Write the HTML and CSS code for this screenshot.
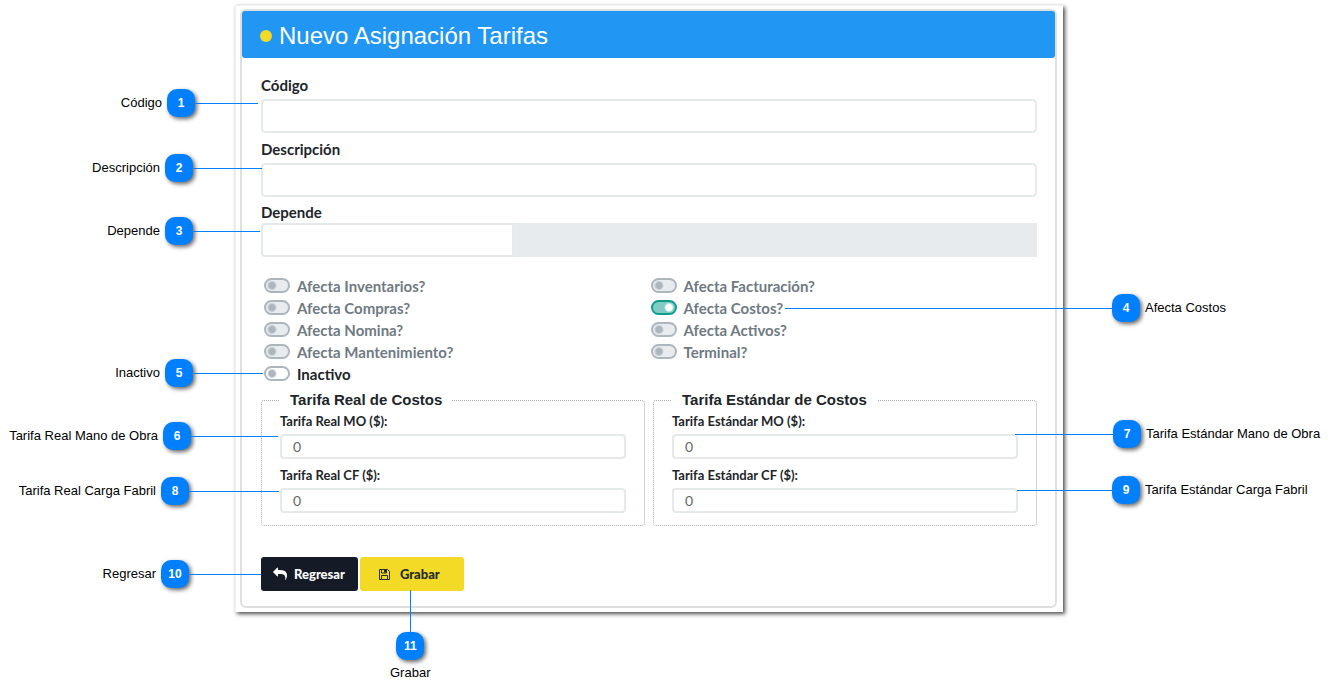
FILE: index.html
```html
<!DOCTYPE html>
<html lang="es">
<head>
<meta charset="utf-8">
<title>Nuevo Asignación Tarifas</title>
<link rel="stylesheet" href="styles.css">
</head>
<body>
<main class="figure">
  <form class="card">
    <h1 class="title"><span class="dot"></span>Nuevo Asignación Tarifas</h1>
    <div class="content">
      <div class="field">
        <label for="codigo">Código</label>
        <input class="text" id="codigo" type="text">
      </div>
      <div class="field">
        <label for="descripcion">Descripción</label>
        <input class="text" id="descripcion" type="text">
      </div>
      <div class="field field-tight">
        <label for="depende">Depende</label>
        <div class="group">
          <input class="text" id="depende" type="text">
          <span class="addon"></span>
        </div>
      </div>

      <div class="switches">
        <div class="switch-col">
          <label class="switch muted"><input type="checkbox" disabled>Afecta Inventarios?</label>
          <label class="switch muted"><input type="checkbox" disabled>Afecta Compras?</label>
          <label class="switch muted"><input type="checkbox" disabled>Afecta Nomina?</label>
          <label class="switch muted"><input type="checkbox" disabled>Afecta Mantenimiento?</label>
          <label class="switch"><input type="checkbox">Inactivo</label>
        </div>
        <div class="switch-col">
          <label class="switch muted"><input type="checkbox" disabled>Afecta Facturación?</label>
          <label class="switch muted"><input type="checkbox" disabled checked>Afecta Costos?</label>
          <label class="switch muted"><input type="checkbox" disabled>Afecta Activos?</label>
          <label class="switch muted"><input type="checkbox" disabled>Terminal?</label>
        </div>
      </div>

      <div class="rates">
        <fieldset class="rate">
          <legend>Tarifa Real de Costos</legend>
          <label for="real-mo">Tarifa Real MO ($):</label>
          <input class="text small" id="real-mo" type="text" value="0">
          <label for="real-cf">Tarifa Real CF ($):</label>
          <input class="text small" id="real-cf" type="text" value="0">
        </fieldset>
        <fieldset class="rate">
          <legend>Tarifa Estándar de Costos</legend>
          <label for="std-mo">Tarifa Estándar MO ($):</label>
          <input class="text small" id="std-mo" type="text" value="0">
          <label for="std-cf">Tarifa Estándar CF ($):</label>
          <input class="text small" id="std-cf" type="text" value="0">
        </fieldset>
      </div>

      <div class="actions">
        <button class="btn back" type="button">
          <svg width="14" height="14" viewBox="0 0 1792 1792" aria-hidden="true"><path fill="currentColor" d="M1792 1120q0 166-127 451-3 7-10.500 24t-13.500 30-13 22q-12 17-28 17-15 0-23.500-10t-8.500-25q0-9 2.500-26.500t2.500-23.500q5-68 5-123 0-101-17.500-181t-48.500-138.500-80-101-105.500-69.500-133-42.500-154-21.500-175.500-6h-224v256q0 26-19 45t-45 19-45-19l-512-512q-19-19-19-45t19-45l512-512q19-19 45-19t45 19 19 45v256h224q713 0 875 403 53 134 53 333z"/></svg>
          Regresar
        </button>
        <button class="btn save" type="button">
          <svg width="13" height="13" viewBox="0 0 13 13" fill="none" stroke="currentColor" aria-hidden="true"><path d="M1.500 1.500h8l2 2v8h-10z"/><path d="M3.500 1.500v3.500h5v-3.500M3.500 11.500v-4h6v4"/><path stroke-width="2" d="M7 2v2.500"/></svg>
          Grabar
        </button>
      </div>
    </div>
  </form>

  <div class="callout left c1">Código<b class="badge">1</b><i class="line"></i></div>
  <div class="callout left c2">Descripción<b class="badge">2</b><i class="line"></i></div>
  <div class="callout left c3">Depende<b class="badge">3</b><i class="line"></i></div>
  <div class="callout c4"><i class="line"></i><b class="badge">4</b>Afecta Costos</div>
  <div class="callout left c5">Inactivo<b class="badge">5</b><i class="line"></i></div>
  <div class="callout left c6">Tarifa Real Mano de Obra<b class="badge">6</b><i class="line"></i></div>
  <div class="callout c7"><i class="line"></i><b class="badge">7</b>Tarifa Estándar Mano de Obra</div>
  <div class="callout left c8">Tarifa Real Carga Fabril<b class="badge">8</b><i class="line"></i></div>
  <div class="callout c9"><i class="line"></i><b class="badge">9</b>Tarifa Estándar Carga Fabril</div>
  <div class="callout left c10">Regresar<b class="badge">10</b><i class="line"></i></div>
  <div class="callout below c11"><i class="line"></i><b class="badge">11</b>Grabar</div>
</main>
</body>
</html>
```

FILE: styles.css
```css
* { box-sizing: border-box; }

body {
  margin: 0;
  padding: 5px 271px 85px 235px;
  background: #fff;
  color: #212529;
  font-family: Lato, "Liberation Sans", sans-serif;
}

.figure {
  position: relative;
  padding: 3px 6px 4px 4px;
  border: 1px solid #f0f0f0;
  border-width: 1px 0 0 1px;
  box-shadow: 2px 2px 4px rgba(0, 0, 0, 0.7);
}

.card {
  border: 2px solid #dfdfdf;
  border-radius: 6px;
}

.title {
  display: flex;
  align-items: center;
  gap: 7px;
  height: 47px;
  margin: 0;
  padding: 2px 18px 0;
  border-radius: 3px;
  background: #2196f3;
  color: #fff;
  font: 24px/32px "Liberation Sans", Arial, sans-serif;
}

.dot {
  width: 12px;
  height: 12px;
  border-radius: 50%;
  background: #f2da26;
}

.content { padding: 17px 18px 15px 19px; }

.field {
  display: flex;
  flex-direction: column;
  gap: 4px;
  margin-bottom: 6px;
  font-size: 15px;
  font-weight: 700;
  line-height: 20px;
}

.field label { height: 20px; }
.field-tight { gap: 0; line-height: 18px; }

.text {
  width: 100%;
  height: 34px;
  padding: 0 11px;
  border: 2px solid #e4e9ea;
  border-radius: 4px;
  background: #fff;
  color: #666;
  font: 14px Lato, sans-serif;
}

.text.small {
  height: 25px;
}

.group { display: flex; }
.group .text { flex: 0 0 253px; border-radius: 4px 0 0 4px; }
.addon { flex: 1; background: #e7ebee; }

.switches {
  display: grid;
  grid-template-columns: 1fr 1fr;
  padding: 12px 0 0 3px;
}

.switch {
  display: flex;
  align-items: center;
  gap: 7px;
  height: 22px;
  font-size: 15px;
  font-weight: 700;
}

.switch.muted { color: #6f7a82; }

.switch input {
  appearance: none;
  width: 26px;
  height: 15px;
  margin: 0 0 2px;
  border: 2px solid #adb5bd;
  border-radius: 8px;
  background: radial-gradient(circle at 6px 50%, #adb5bd 3px, transparent 5px) #fff;
}

.switch input:disabled { background-color: #e9ecef; }

.switch input:checked {
  border-color: #109c8a;
  background: radial-gradient(circle at 16px 50%, #fff 3px, transparent 5px) #80cbc4;
}

.rates {
  display: grid;
  grid-template-columns: 1fr 1fr;
  gap: 8px;
  margin-top: 6px;
}

.rate {
  display: flex;
  flex-direction: column;
  min-width: 0;
  margin: 0;
  padding: 0 18px 12px;
  border: 1px dotted #aaa;
  border-radius: 3px;
  font-size: 13px;
  font-weight: 700;
  line-height: 20px;
}

.rate legend {
  padding: 0 10px;
  font: bold 15px/18px "Liberation Sans", Arial, sans-serif;
}

.rate label { margin: 2px 0 3px; }
.rate .text + label { margin-top: 6px; }

.actions {
  display: flex;
  gap: 2px;
  margin-top: 31px;
}

.btn {
  display: flex;
  align-items: center;
  justify-content: center;
  gap: 7px;
  height: 34px;
  padding: 0 13px 0 12px;
  border: 0;
  border-radius: 3px;
  font: 900 13px Lato, sans-serif;
}

.back { background: #151b26; color: #fff; }
.save { gap: 9px; padding: 0 24px 0 18px; background: #f2da26; color: #252c2c; }

.callout {
  position: absolute;
  display: flex;
  align-items: center;
  color: #000;
  font: 13px/20px "Liberation Sans", Arial, sans-serif;
  white-space: nowrap;
}

.badge {
  width: 28px;
  height: 28px;
  margin: 0 5px 0 0;
  border-radius: 10px;
  background: #0080ff;
  box-shadow: 2px 2px 4px rgba(0, 0, 0, 0.6);
  color: #fff;
  font-size: 12px;
  line-height: 28px;
  text-align: center;
}

.left .badge { margin: 0 0 0 5px; }

.line { height: 1px; background: #0080ff; }

.below { flex-direction: column; }
.below .badge { margin: 0 0 3px; }
.below .line { width: 1px; height: 42px; }

.c1 { top: 83px; right: calc(100% - 22px); }
.c1 .line { width: 63px; }
.c2 { top: 148px; right: calc(100% - 26px); }
.c2 .line { width: 69px; }
.c3 { top: 211px; right: calc(100% - 24px); }
.c3 .line { width: 67px; }
.c4 { top: 288px; left: calc(100% - 278px); }
.c4 .line { width: 327px; }
.c5 { top: 353px; right: calc(100% - 27px); }
.c5 .line { width: 70px; }
.c6 { top: 416px; right: calc(100% - 42px); }
.c6 .line { width: 87px; }
.c7 { top: 414px; left: calc(100% - 48px); }
.c7 .line { width: 98px; }
.c8 { top: 471px; right: calc(100% - 43px); }
.c8 .line { width: 90px; }
.c9 { top: 470px; left: calc(100% - 46px); }
.c9 .line { width: 95px; }
.c10 { top: 554px; right: calc(100% - 25px); }
.c10 .line { width: 72px; }
.c11 { top: 584px; left: 154px; }
```
